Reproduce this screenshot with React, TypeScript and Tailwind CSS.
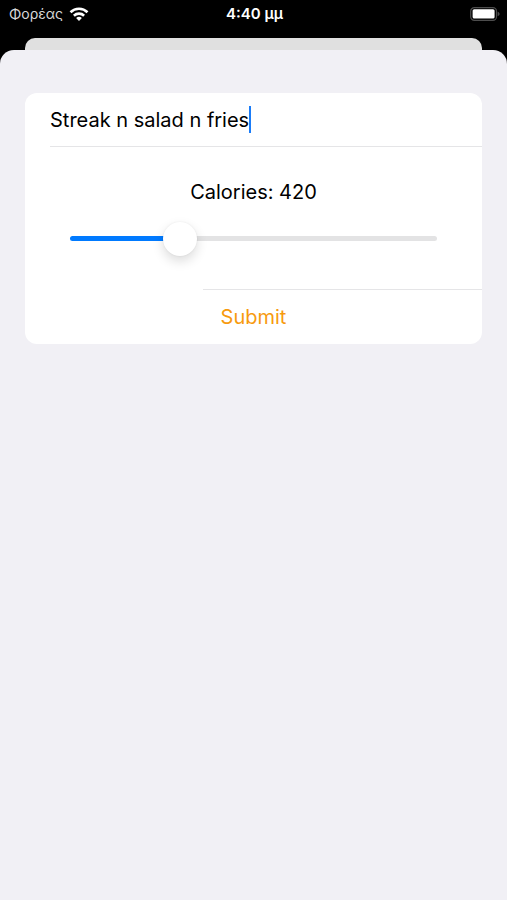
import { useState } from 'react'

const MAX_CALORIES = 1500

function WifiIcon() {
  return (
    <svg viewBox="0 0 20 15" className="h-[15px] w-5" aria-hidden="true">
      <g fill="none" stroke="white" strokeWidth="2.6">
        <path d="M1.5 5.2a12.2 12.2 0 0 1 17 0" />
        <path d="M4.9 8.7a7.3 7.3 0 0 1 10.2 0" />
      </g>
      <path d="M10 14 7.1 11.1a4.1 4.1 0 0 1 5.8 0Z" fill="white" />
    </svg>
  )
}

function BatteryIcon() {
  return (
    <svg viewBox="0 0 30 14" className="h-[14px] w-[30px]" aria-hidden="true">
      <rect x="0.7" y="0.7" width="25.8" height="12.6" rx="3.6" fill="none" stroke="#4d4d4d" strokeWidth="1.2" />
      <rect x="2.6" y="2.2" width="22" height="9.4" rx="1.6" fill="white" />
      <path d="M27.6 4.8c1.2.4 2 1.2 2 2.2s-.8 1.8-2 2.2Z" fill="#4d4d4d" />
    </svg>
  )
}

function StatusBar() {
  return (
    <div className="grid h-[38px] grid-cols-3 items-start pt-1 pr-[7px] pl-[9px] text-sm leading-5 text-white">
      <div className="flex items-center gap-[6px]">
        <span className="text-[#d8d8d8]">Φορέας</span>
        <WifiIcon />
      </div>
      <span className="text-center text-[15px] leading-5 font-semibold">4:40 μμ</span>
      <div className="flex h-5 items-center justify-end">
        <BatteryIcon />
      </div>
    </div>
  )
}

type SliderProps = {
  value: number
  onChange(value: number): void
}

function CalorieSlider(p: SliderProps) {
  const percent = (p.value / MAX_CALORIES) * 100

  return (
    <input
      id="calories"
      type="range"
      min={0}
      max={MAX_CALORIES}
      step={10}
      value={p.value}
      onChange={(e) => p.onChange(Number(e.target.value))}
      style={{
        backgroundImage: `linear-gradient(to right, #007aff ${percent}%, #e3e3e4 ${percent}%)`,
      }}
      className="block h-[5px] w-full cursor-pointer appearance-none rounded-full outline-none [&::-webkit-slider-thumb]:size-[34px] [&::-webkit-slider-thumb]:appearance-none [&::-webkit-slider-thumb]:rounded-full [&::-webkit-slider-thumb]:bg-white [&::-webkit-slider-thumb]:shadow-[0_5px_12px_rgba(0,0,0,0.14),0_0_2px_rgba(0,0,0,0.08)]"
    />
  )
}

export default function App() {
  const [name, setName] = useState('Streak n salad n fries')
  const [calories, setCalories] = useState(420)

  return (
    <div className="flex min-h-screen flex-col bg-black font-['Inter','Noto_Sans',sans-serif]">
      <StatusBar />
      <div className="mx-[25px] h-3 rounded-t-[10px] bg-[#e0e0e0]" />

      <main className="flex-1 rounded-t-[14px] bg-[#f1f0f5] px-[25px] pt-[43px]">
        <form
          onSubmit={(e) => e.preventDefault()}
          className="rounded-xl bg-white text-xl leading-6 text-black"
        >
          <div className="ml-[25px] flex h-[54px] items-center border-b border-[#e5e5e7]">
            <input
              type="text"
              aria-label="Food name"
              value={name}
              onChange={(e) => setName(e.target.value)}
              className="field-sizing-content max-w-full caret-transparent outline-none"
            />
            <span className="h-[27px] w-[2px] bg-[#1a7cf8]" />
          </div>

          <div className="px-[45px] pt-[33px] pb-12">
            <label htmlFor="calories" className="mb-8 block text-center">
              Calories: {calories}
            </label>
            <CalorieSlider value={calories} onChange={setCalories} />
          </div>

          <div className="ml-auto h-px w-[61%] bg-[#e5e5e7]" />
          <button type="submit" className="block h-[54px] w-full cursor-pointer text-[#f79a0e]">
            Submit
          </button>
        </form>
      </main>
    </div>
  )
}
